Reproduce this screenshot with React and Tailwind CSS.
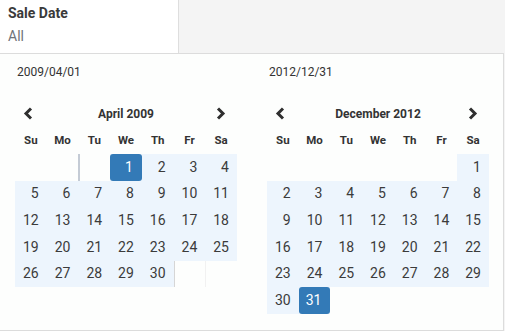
import React from "react";

function Chevron({ dir }) {
  return (
    <svg width="10" height="13" viewBox="0 0 10 13" className="block">
      {dir === "left" ? (
        <polyline points="8,1.5 3,6.5 8,11.5" fill="none" stroke="#2f2f2f" strokeWidth="3" strokeLinecap="butt" strokeLinejoin="miter" />
      ) : (
        <polyline points="2,1.5 7,6.5 2,11.5" fill="none" stroke="#2f2f2f" strokeWidth="3" strokeLinecap="butt" strokeLinejoin="miter" />
      )}
    </svg>
  );
}

const DAYS = ["Su", "Mo", "Tu", "We", "Th", "Fr", "Sa"];

function Cell({ c }) {
  if (!c) return <div className="h-[26.67px]" />;
  if (c.line) {
    return (
      <div className="h-[26.67px] flex">
        <div className={c.line === "blue" ? "w-[1.5px] h-full bg-[#c4cbd5]" : c.line === "gray" ? "w-[1.5px] h-full bg-[#d6d6d6]" : "w-px h-full bg-[#f1f1f1]"} />
      </div>
    );
  }
  if (c.sel) {
    return (
      <div className="h-[26.67px] bg-[#edf5fd]">
        <div className="h-full rounded-[3px] bg-[#337ab7] text-white flex items-center justify-end pr-[9px]">{c.d}</div>
      </div>
    );
  }
  return (
    <div className={"h-[26.67px] flex items-center justify-end pr-[8px] text-[#3b3b3b] " + (c.r ? "bg-[#edf5fd]" : "")}>{c.d}</div>
  );
}

function Calendar({ date, title, rows }) {
  return (
    <div className="w-[222px] flex flex-col">
      <div className="h-[16px] leading-[16px] text-[12px] text-[#333] pl-[2px]">{date}</div>
      <div className="mt-[20px] h-[27px] flex items-center">
        <div className="w-[31.7px] flex justify-center pr-[6px]"><Chevron dir="left" /></div>
        <div className="flex-1 text-center font-bold text-[12px] text-[#333]">{title}</div>
        <div className="w-[31.7px] flex justify-center"><Chevron dir="right" /></div>
      </div>
      <div className="grid grid-cols-7 h-[27px] items-center">
        {DAYS.map((d) => (
          <div key={d} className="text-center font-bold text-[11.5px] text-[#333]">{d}</div>
        ))}
      </div>
      <div className="grid grid-cols-7 text-[14px]">
        {rows.flat().map((c, i) => (
          <Cell key={i} c={c} />
        ))}
      </div>
    </div>
  );
}

function range(a, b) {
  const out = [];
  for (let i = a; i <= b; i++) out.push({ d: i, r: true });
  return out;
}

const leftRows = [
  [null, null, { line: "blue" }, { d: 1, sel: true }, { d: 2, r: true }, { d: 3, r: true }, { d: 4, r: true }],
  range(5, 11),
  range(12, 18),
  range(19, 25),
  [...range(26, 30), { line: "gray" }, { line: "faint" }],
];

const rightRows = [
  [null, null, null, null, null, null, { d: 1, r: true }],
  range(2, 8),
  range(9, 15),
  range(16, 22),
  range(23, 29),
  [{ d: 30, r: true }, { d: 31, sel: true }, null, null, null, null, null],
];

export default function App() {
  return (
    <div className="w-[505px] h-[331px] bg-[#f4f4f4] overflow-hidden" style={{ fontFamily: "Roboto, 'Noto Sans', sans-serif" }}>
      <div className="h-[53px] w-[179px] bg-white border-r border-[#dedede] px-2 pt-[3px]">
        <div className="leading-[20px] text-[14px] font-bold text-[#3a3a3a]">Sale Date</div>
        <div className="mt-[3px] leading-[20px] text-[14px] text-[#707379]">All</div>
      </div>
      <div className="w-[504px] h-[278px] bg-[#fdfefd] border-t border-r border-b border-[#dcdcdc] flex pl-[15px] pt-[10px] gap-[30px]">
        <Calendar date="2009/04/01" title="April 2009" rows={leftRows} />
        <Calendar date="2012/12/31" title="December 2012" rows={rightRows} />
      </div>
    </div>
  );
}
